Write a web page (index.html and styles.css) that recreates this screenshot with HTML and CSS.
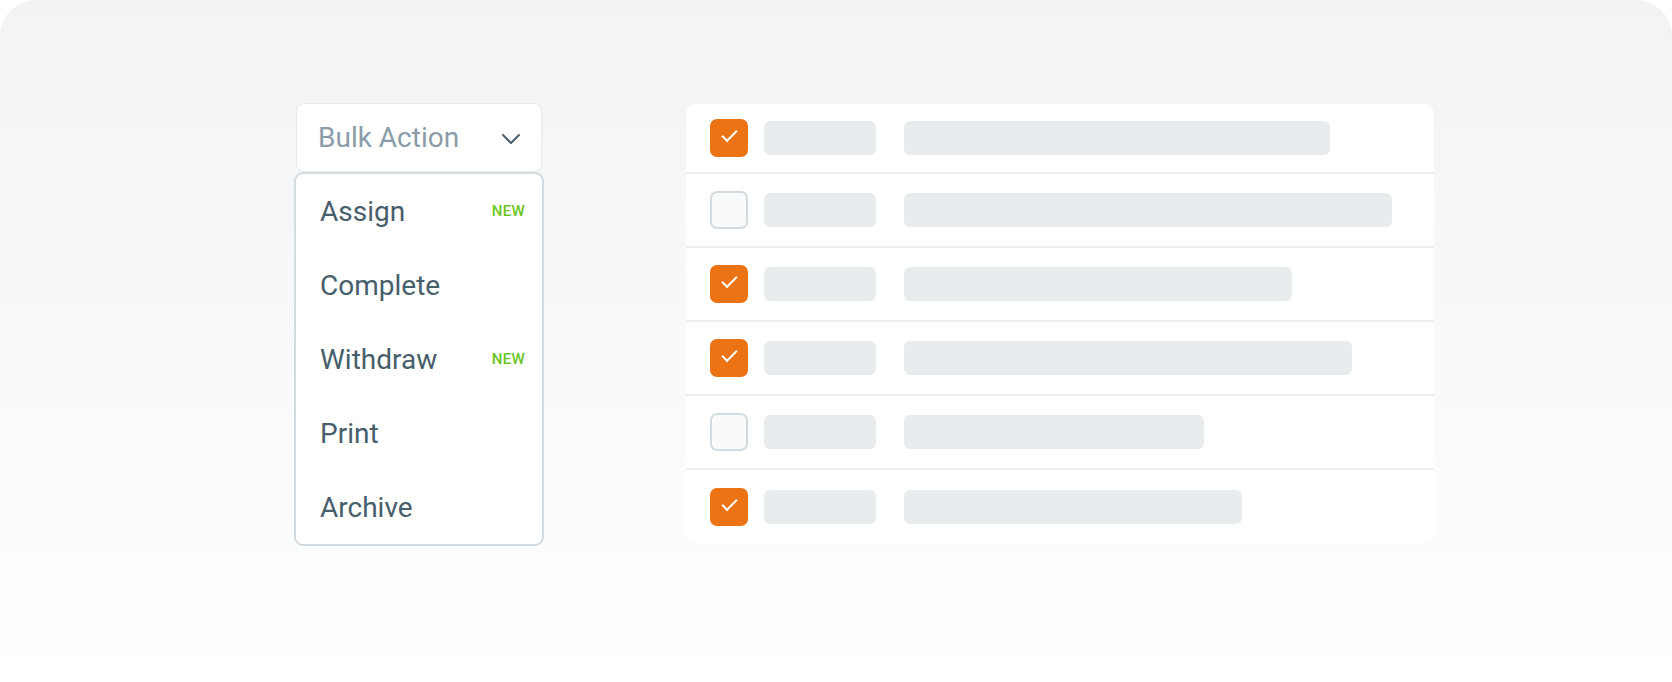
FILE: index.html
```html
<!DOCTYPE html>
<html lang="en">
<head>
    <meta charset="UTF-8">
    <title>Bulk Action</title>
    <link rel="stylesheet" href="styles.css">
</head>
<body>
    <div class="stage">
        <div class="bulk">
            <div class="select">
                <span>Bulk Action</span>
                <svg class="chevron" width="20" height="12" viewBox="0 0 20 12">
                    <path d="M2 2 L10 10 L18 2" fill="none" stroke="#4a5f6c" stroke-width="2" stroke-linecap="round" stroke-linejoin="round"/>
                </svg>
            </div>
            <ul class="menu">
                <li>Assign <span class="new">NEW</span></li>
                <li>Complete</li>
                <li>Withdraw <span class="new">NEW</span></li>
                <li>Print</li>
                <li>Archive</li>
            </ul>
        </div>

        <div class="table">
            <div class="row">
                <span class="box checked"></span>
                <span class="bar short"></span>
                <span class="bar" style="width: 426px"></span>
            </div>
            <div class="row">
                <span class="box"></span>
                <span class="bar short"></span>
                <span class="bar" style="width: 488px"></span>
            </div>
            <div class="row">
                <span class="box checked"></span>
                <span class="bar short"></span>
                <span class="bar" style="width: 388px"></span>
            </div>
            <div class="row">
                <span class="box checked"></span>
                <span class="bar short"></span>
                <span class="bar" style="width: 448px"></span>
            </div>
            <div class="row">
                <span class="box"></span>
                <span class="bar short"></span>
                <span class="bar" style="width: 300px"></span>
            </div>
            <div class="row">
                <span class="box checked"></span>
                <span class="bar short"></span>
                <span class="bar" style="width: 338px"></span>
            </div>
        </div>
    </div>
</body>
</html>
```

FILE: styles.css
```css
html, body {
    margin: 0;
    background-color: #ffffff;
}

body {
    font-family: Roboto, "Liberation Sans", sans-serif;
}

.stage {
    width: 1672px;
    height: 682px;
    box-sizing: border-box;
    padding: 103px 0 0 294px;
    display: flex;
    align-items: flex-start;
    gap: 142px;
    border-radius: 36px 36px 0 0;
    background: linear-gradient(#f1f3f5, #ffffff);
}

.bulk {
    width: 250px;
    display: flex;
    flex-direction: column;
}

.select {
    margin: 0 2px;
    height: 69px;
    box-sizing: border-box;
    padding: 0 20px 0 21px;
    display: flex;
    align-items: center;
    justify-content: space-between;
    background-color: #ffffff;
    border: 1px solid #e6eaed;
    border-radius: 8px;
    font-size: 28px;
    color: #8a9ca9;
}

.chevron {
    margin-top: 2px;
}

.menu {
    list-style: none;
    margin: 0;
    padding: 0;
    background-color: #ffffff;
    border: 2px solid #d2dbe0;
    border-radius: 9px;
}

.menu li {
    height: 74px;
    display: flex;
    align-items: center;
    justify-content: space-between;
    padding: 0 17px 0 24px;
    font-size: 28px;
    color: #475e6b;
}

.new {
    font-size: 15px;
    font-weight: 500;
    color: #6bc61d;
    letter-spacing: 0.3px;
}

.table {
    margin-top: 1px;
    width: 748px;
    background-color: #ffffff;
    border-radius: 10px;
    overflow: hidden;
}

.row {
    height: 72px;
    display: flex;
    align-items: center;
    padding-left: 24px;
    border-bottom: 2px solid #e8edf1;
}

.row:first-child {
    height: 68px;
}

.row:last-child {
    height: 73px;
    border-bottom: none;
}

.box {
    width: 38px;
    height: 38px;
    box-sizing: border-box;
    border: 2px solid #d3dbe0;
    border-radius: 7px;
    background-color: #f8fafb;
    margin-right: 16px;
    position: relative;
}

.box.checked {
    border: none;
    background-color: #ec7314;
}

.box.checked::after {
    content: "";
    position: absolute;
    left: 12px;
    top: 11px;
    width: 13px;
    height: 6px;
    border-left: 2.5px solid #ffffff;
    border-bottom: 2.5px solid #ffffff;
    transform: rotate(-45deg);
}

.bar {
    height: 34px;
    border-radius: 6px;
    background-color: #e8ecef;
}

.bar.short {
    width: 112px;
    margin-right: 28px;
}
```
